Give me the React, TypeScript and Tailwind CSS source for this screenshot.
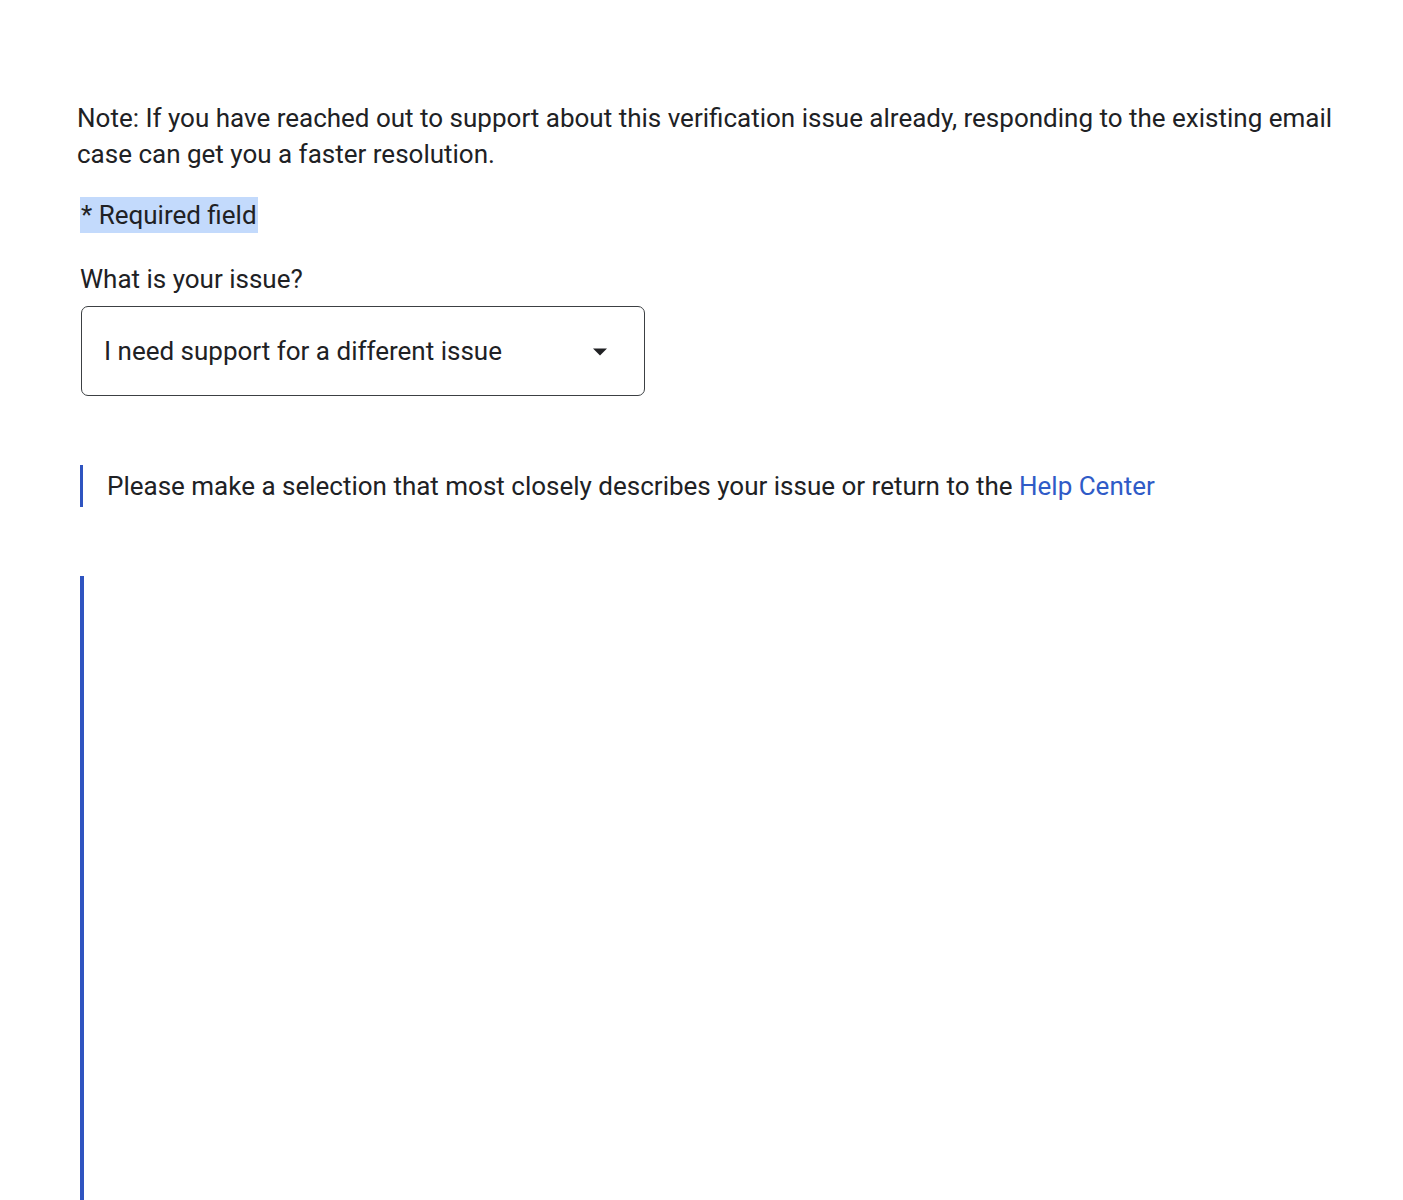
import React from "react";

export default function App() {
  return (
    <div className="h-[1200px] w-[1403px] bg-white text-[#202124] overflow-hidden" style={{ fontFamily: "Roboto, 'Noto Sans', sans-serif" }}>
      <div className="pl-[77px] pr-[40px] pt-[100px]">
        <p className="text-[26px] leading-[36px]">
          Note: If you have reached out to support about this verification issue already, responding to the existing email case can get you a faster resolution.
        </p>
        <div className="mt-[25px] pl-[3px]">
          <span className="bg-[#c3dafc] text-[26px] leading-[36px] inline-block pl-[1px] pr-[1px]">* Required field</span>
        </div>
        <div className="mt-[31px] pl-[3px] text-[26px] leading-[30px]">What is your issue?</div>
        <div className="mt-[12px] ml-[4px] w-[564px] h-[90px] rounded-[7px] border-[1.5px] border-[#3c4043] flex items-center pl-[22px] pr-[36px] justify-between">
          <span className="text-[26px]">I need support for a different issue</span>
          <svg width="16" height="10" viewBox="0 0 16 10" className="mt-[2px]">
            <path d="M1 1.5 L15 1.5 L8 8.5 Z" fill="#202124" />
          </svg>
        </div>
        <div className="mt-[69px] ml-[3px] border-l-[3px] border-[#2f54c0] h-[42px] flex items-center pl-[24px]">
          <span className="text-[26px]">
            Please make a selection that most closely describes your issue or return to the{" "}
            <span className="text-[#2f5bc7]">Help Center</span>
          </span>
        </div>
        <div className="mt-[69px] ml-[3px] border-l-[4px] border-[#2f54c0] h-[700px]" />
      </div>
    </div>
  );
}
